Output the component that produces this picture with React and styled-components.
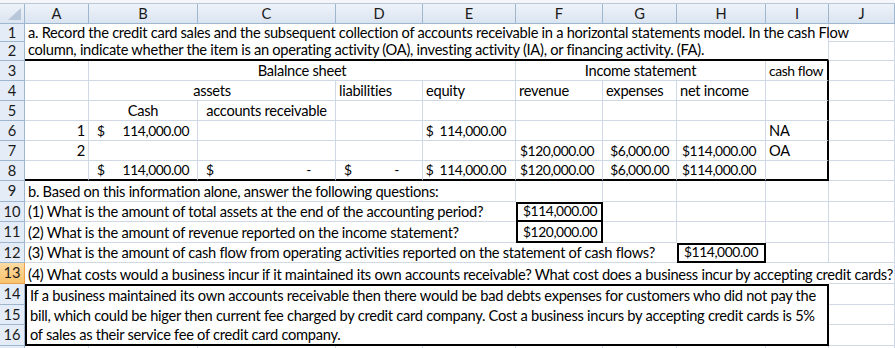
import React from 'react';
import styled, { createGlobalStyle } from 'styled-components';

const GRID = '#D0D7E5';
const HEAD_LINE = '#9EB6CE';
const THICK = '2px solid #000';

const Global = createGlobalStyle`
  html, body { margin: 0; padding: 0; background: #fff; overflow: hidden; }
  body { font-family: Lato, "Liberation Sans", sans-serif; }
`;

const COLS = ['A', 'B', 'C', 'D', 'E', 'F', 'G', 'H', 'I', 'J'];

const Sheet = styled.div`
  display: grid;
  grid-template-columns: 25px 64px 109px 138px 87px 93px 87px 74px 89px 63px 66px;
  grid-template-rows: 4px 20px 18px 19px repeat(6, 20px) 21px 20px 21px 20px 21px 21px 20px 21px 2px;
  width: 895px;
  height: 348px;
  overflow: hidden;
  font-family: Lato, "Liberation Sans", sans-serif;
  font-size: 14.67px;
  letter-spacing: -0.28px;
  color: #000;
  background: #fff;
`;

const TopStrip = styled.div`
  grid-column: 1 / -1;
  box-sizing: border-box;
  background: #f4f6f9;
  border-bottom: 1px solid #b9c6d6;
`;

const Corner = styled.div`
  box-sizing: border-box;
  background: linear-gradient(#eef3f9, #dbe4f0);
  border-right: 1px solid ${HEAD_LINE};
  border-bottom: 1px solid ${HEAD_LINE};
  display: flex;
  align-items: flex-end;
  justify-content: flex-end;
  padding: 0 3px 3px 0;
`;

const ColHead = styled.div`
  box-sizing: border-box;
  background: linear-gradient(#eef3f9, #dae4f1);
  border-right: 1px solid ${HEAD_LINE};
  border-bottom: 1px solid ${HEAD_LINE};
  display: flex;
  align-items: center;
  justify-content: center;
  color: #1b1b1b;
  line-height: 18px;
  letter-spacing: 0;
`;

const RowHead = styled.div`
  box-sizing: border-box;
  background: ${(p) => (p.$selected ? 'linear-gradient(#fddba3, #f8c26c)' : '#e4ecf7')};
  border-right: 1px solid ${(p) => (p.$selected ? '#e8a04a' : HEAD_LINE)};
  border-bottom: 1px solid ${(p) => (p.$selected ? '#e8a04a' : HEAD_LINE)};
  display: flex;
  align-items: center;
  justify-content: center;
  color: #1b1b1b;
  line-height: 18px;
  letter-spacing: 0;
  overflow: hidden;
`;

const edge = (v) => (v === 'thick' ? THICK : v === 'none' ? '0' : `1px solid ${GRID}`);

const Cell = styled.div`
  grid-column: span ${(p) => p.$span || 1};
  box-sizing: border-box;
  min-width: 0;
  border-right: ${(p) => edge(p.$r)};
  border-bottom: ${(p) => edge(p.$b)};
  border-top: ${(p) => (p.$t ? THICK : '0')};
  border-left: ${(p) => (p.$l ? THICK : '0')};
  display: flex;
  align-items: flex-end;
  justify-content: ${(p) =>
    p.$align === 'center' ? 'center' : p.$align === 'right' ? 'flex-end' : 'flex-start'};
  padding: 0 ${(p) => (p.$pr != null ? p.$pr : 3)}px 0 ${(p) => (p.$pl != null ? p.$pl : 3)}px;
  white-space: nowrap;
  overflow: visible;
  line-height: 18px;
  font-size: ${(p) => (p.$fit ? '13.9px' : 'inherit')};
  letter-spacing: ${(p) => (p.$fit ? '-0.4px' : 'inherit')};
`;

const AcctCell = styled(Cell)`
  justify-content: space-between;
  padding: 0 ${(p) => p.$pr}px 0 8px;
`;

const Num = styled.span`
  font-size: 13.8px;
  letter-spacing: -0.4px;
`;

const Dollar = styled.span`
  font-size: 13.8px;
  margin-right: ${(p) => p.$gap || 0}px;
`;

const CornerMark = () => (
  <svg width="13" height="12" viewBox="0 0 13 12">
    <polygon points="13,0 13,12 0,12" fill="#b8c6d9" />
  </svg>
);

const rows = [
  [
    { span: 9, b: 'none', text: 'a. Record the credit card sales and the subsequent collection of accounts receivable in a horizontal statements model. In the cash Flow' },
    {},
  ],
  [
    { span: 9, b: 'thick', text: 'column, indicate whether the item is an operating activity (OA), investing activity (IA), or financing activity. (FA).' },
    {},
  ],
  [
    {},
    { span: 4, align: 'center', text: 'Balalnce sheet' },
    { span: 3, align: 'center', text: 'Income statement' },
    { r: 'thick', fit: true, text: 'cash flow' },
    {},
  ],
  [
    {},
    { span: 2, align: 'center', text: 'assets' },
    { text: 'liabilities' },
    { text: 'equity' },
    { text: 'revenue' },
    { text: 'expenses' },
    { text: 'net income' },
    { r: 'thick' },
    {},
  ],
  [
    {},
    { align: 'center', text: 'Cash' },
    { align: 'center', text: 'accounts receivable' },
    {}, {}, {}, {}, {},
    { r: 'thick' },
    {},
  ],
  [
    { align: 'right', text: '1' },
    { acct: '114,000.00', pr: 8 },
    {}, {},
    { align: 'right', pr: 9, dollar: '114,000.00', gap: 6 },
    {}, {}, {},
    { r: 'thick', text: 'NA' },
    {},
  ],
  [
    { align: 'right', text: '2' },
    {}, {}, {},
    {},
    { align: 'right', pr: 8, num: '$120,000.00' },
    { align: 'right', pr: 7, num: '$6,000.00' },
    { align: 'right', pr: 9, num: '$114,000.00' },
    { r: 'thick', text: 'OA' },
    {},
  ],
  [
    { b: 'thick' },
    { b: 'thick', acct: '114,000.00', pr: 8 },
    { b: 'thick', acct: '-', pr: 24 },
    { b: 'thick', acct: '-', pr: 23 },
    { b: 'thick', align: 'right', pr: 9, dollar: '114,000.00', gap: 6 },
    { b: 'thick', align: 'right', pr: 8, num: '$120,000.00' },
    { b: 'thick', align: 'right', pr: 7, num: '$6,000.00' },
    { b: 'thick', align: 'right', pr: 9, num: '$114,000.00' },
    { b: 'thick', r: 'thick' },
    {},
  ],
  [
    { span: 5, text: 'b. Based on this information alone, answer the following questions:' },
    { b: 'none' }, {}, {}, {}, {},
  ],
  [
    { span: 5, r: 'none', text: '(1) What is the amount of total assets at the end of the accounting period?' },
    { t: true, l: true, r: 'thick', b: 'thick', align: 'right', pr: 4, num: '$114,000.00' },
    {}, {}, {}, {},
  ],
  [
    { span: 5, r: 'none', text: '(2) What is the amount of revenue reported on the income statement?' },
    { l: true, r: 'thick', b: 'thick', align: 'right', pr: 4, num: '$120,000.00' },
    {}, { b: 'none' }, {}, {},
  ],
  [
    { span: 7, r: 'none', text: '(3) What is the amount of cash flow from operating activities reported on the statement of cash flows?' },
    { t: true, l: true, r: 'thick', b: 'thick', align: 'right', pr: 6, num: '$114,000.00' },
    {}, {},
  ],
  [
    { span: 9, r: 'none', b: 'none', text: '(4) What costs would a business incur if it maintained its own accounts receivable? What cost does a business incur by accepting credit cards?' },
    {},
  ],
  [
    { span: 9, t: true, l: true, r: 'thick', b: 'none', text: 'If a business maintained its own accounts receivable then there would be bad debts expenses for customers who did not pay the' },
    {},
  ],
  [
    { span: 9, l: true, r: 'thick', b: 'none', text: 'bill, which could be higer then current fee charged by credit card company. Cost a business incurs by accepting credit cards is 5%' },
    {},
  ],
  [
    { span: 9, l: true, r: 'thick', b: 'thick', text: 'of sales as their service fee of credit card company.' },
    {},
  ],
];

const renderCell = (c, key) => {
  const common = {
    key,
    $span: c.span,
    $align: c.align,
    $b: c.b,
    $r: c.r,
    $t: c.t,
    $l: c.l,
    $pr: c.pr,
    $fit: c.fit,
  };
  if (c.acct) {
    return (
      <AcctCell {...common}>
        <Dollar>$</Dollar>
        <Num>{c.acct}</Num>
      </AcctCell>
    );
  }
  if (c.dollar) {
    return (
      <Cell {...common}>
        <Dollar $gap={c.gap}>$</Dollar>
        <Num>{c.dollar}</Num>
      </Cell>
    );
  }
  if (c.num) {
    return (
      <Cell {...common}>
        <Num>{c.num}</Num>
      </Cell>
    );
  }
  return <Cell {...common}>{c.text}</Cell>;
};

const LastRow = styled.div`
  grid-column: 1 / -1;
  display: grid;
  grid-template-columns: subgrid;
`;

const LastHead = styled.div`
  background: #e4ecf7;
  border-right: 1px solid ${HEAD_LINE};
`;

const LastCell = styled.div`
  border-right: 1px solid ${GRID};
`;

export default function App() {
  return (
    <>
      <Global />
      <Sheet>
        <TopStrip />
        <Corner>
          <CornerMark />
        </Corner>
        {COLS.map((c) => (
          <ColHead key={c}>{c}</ColHead>
        ))}
        {rows.map((cells, i) => (
          <React.Fragment key={i}>
            <RowHead $selected={i + 1 === 13}>{i + 1}</RowHead>
            {cells.map((c, j) => renderCell(c, `${i}-${j}`))}
          </React.Fragment>
        ))}
        <LastRow>
          <LastHead />
          {COLS.map((c) => (
            <LastCell key={c} />
          ))}
        </LastRow>
      </Sheet>
    </>
  );
}
